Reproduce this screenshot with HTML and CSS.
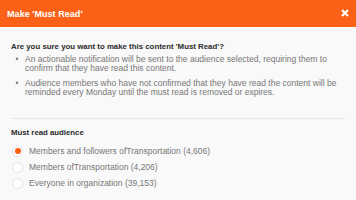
FILE: index.html
```html
<!DOCTYPE html>
<html>
<head>
<meta charset="utf-8">
<link rel="stylesheet" href="styles.css">
</head>
<body>
<div class="dialog">
  <div class="header">
    <span class="title">Make 'Must Read'</span>
    <svg class="close" width="8" height="8" viewBox="0 0 8 8"><path d="M1 1L7 7M7 1L1 7" stroke="#fff" stroke-width="2.2" stroke-linecap="butt"/></svg>
  </div>
  <div class="content">
    <p class="question">Are you sure you want to make this content 'Must Read'?</p>
    <ul class="notes">
      <li>An actionable notification will be sent to the audience selected, requiring them to confirm that they have read this content.</li>
      <li>Audience members who have not confirmed that they have read the content will be reminded every Monday until the must read is removed or expires.</li>
    </ul>
    <div class="divider"></div>
    <p class="heading">Must read audience</p>
    <div class="options">
      <div class="option"><span class="radio checked"></span><span class="label">Members and followers ofTransportation (4,606)</span></div>
      <div class="option"><span class="radio"></span><span class="label">Members ofTransportation (4,206)</span></div>
      <div class="option"><span class="radio"></span><span class="label">Everyone in organization (39,153)</span></div>
    </div>
  </div>
</div>
</body>
</html>
```
FILE: styles.css
```css
html, body {
  margin: 0;
  padding: 0;
}
body {
  width: 356px;
  height: 200px;
  overflow: hidden;
  background: #f9f9f9;
  font-family: "Liberation Sans", Arial, sans-serif;
}
.header {
  height: 27px;
  background: #fa6116;
  display: flex;
  align-items: center;
  justify-content: space-between;
  padding: 0 7px 0 7px;
  border-bottom: 1px solid #fdfdfd;
}
.title {
  color: #fff;
  font-weight: bold;
  font-size: 9.1px;
  line-height: 10px;
}
.close {
  display: block;
  margin-top: -1px;
}
.content {
  padding: 14px 11px 0 11px;
}
.question {
  margin: 0;
  font-size: 7.85px;
  line-height: 10px;
  font-weight: bold;
  color: #2a2a2a;
}
.notes {
  list-style: none;
  margin: 3px 0 0 0;
  padding: 0;
}
.notes li {
  display: flex;
  font-size: 8.5px;
  line-height: 9px;
  color: #777;
}
.notes li + li {
  margin-top: 6px;
}
.notes li::before {
  content: "•";
  flex: 0 0 8px;
  margin-left: 2px;
  margin-right: 4px;
  text-align: center;
}
.divider {
  height: 1px;
  background: #e8e8e8;
  margin-top: 21px;
}
.heading {
  margin: 9px 0 0 0;
  font-size: 7.8px;
  line-height: 10px;
  font-weight: bold;
  color: #2a2a2a;
}
.options {
  margin-top: 5px;
  padding-left: 1px;
}
.option {
  height: 16px;
  display: flex;
  align-items: center;
}
.radio {
  width: 11px;
  height: 11px;
  box-sizing: border-box;
  border: 1px solid #e2e2e2;
  border-radius: 50%;
  background: #fff;
  margin-right: 6px;
  display: flex;
  align-items: center;
  justify-content: center;
}
.radio.checked::after {
  content: "";
  width: 6px;
  height: 6px;
  border-radius: 50%;
  background: #fa6116;
}
.label {
  font-size: 8.5px;
  line-height: 10px;
  color: #777;
}
```
